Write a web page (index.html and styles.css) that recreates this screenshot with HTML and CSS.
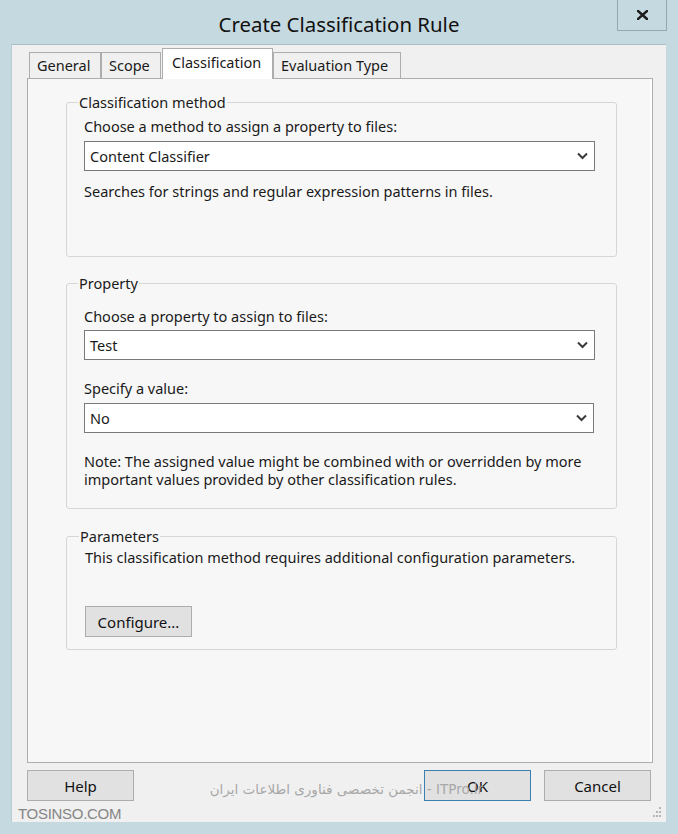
FILE: index.html
```html
<!DOCTYPE html>
<html lang="en">
<head>
    <meta charset="UTF-8">
    <meta name="viewport" content="width=device-width, initial-scale=1.0">
    <title>Create Classification Rule</title>
    <link rel="stylesheet" href="styles.css">
</head>
<body>
    <div class="window">
        <div class="titlebar">
            <span></span>
            <h1 class="title">Create Classification Rule</h1>
            <button class="close" aria-label="Close">
                <svg width="11" height="10" viewBox="0 0 11 10">
                    <path d="M1 1 L10 9 M10 1 L1 9" stroke="#1c1c1c" stroke-width="2.4" stroke-linecap="square"/>
                </svg>
            </button>
        </div>

        <div class="client">
            <div class="tabs">
                <div class="tab tab-general">General</div>
                <div class="tab tab-scope">Scope</div>
                <div class="tab tab-active">Classification</div>
                <div class="tab tab-eval">Evaluation Type</div>
            </div>

            <div class="panel">
                <fieldset class="group group-method">
                    <legend>Classification method</legend>
                    <div class="label first">Choose a method to assign a property to files:</div>
                    <div class="combo">
                        <span>Content Classifier</span>
                        <svg width="11" height="8" viewBox="0 0 11 8"><path d="M1 1.5 L5.5 6 L10 1.5" fill="none" stroke="#3a3a3a" stroke-width="2"/></svg>
                    </div>
                    <div class="desc">Searches for strings and regular expression patterns in files.</div>
                </fieldset>

                <fieldset class="group group-property">
                    <legend>Property</legend>
                    <div class="label">Choose a property to assign to files:</div>
                    <div class="combo">
                        <span>Test</span>
                        <svg width="11" height="8" viewBox="0 0 11 8"><path d="M1 1.5 L5.5 6 L10 1.5" fill="none" stroke="#3a3a3a" stroke-width="2"/></svg>
                    </div>
                    <div class="label spaced">Specify a value:</div>
                    <div class="combo combo-narrow">
                        <span>No</span>
                        <svg width="11" height="8" viewBox="0 0 11 8"><path d="M1 1.5 L5.5 6 L10 1.5" fill="none" stroke="#3a3a3a" stroke-width="2"/></svg>
                    </div>
                    <p class="note">Note: The assigned value might be combined with or overridden by more important values provided by other classification rules.</p>
                </fieldset>

                <fieldset class="group group-params">
                    <legend>Parameters</legend>
                    <div class="params-text">This classification method requires additional configuration parameters.</div>
                    <button class="btn btn-configure">Configure...</button>
                </fieldset>
            </div>

            <div class="buttons">
                <button class="btn">Help</button>
                <div class="spacer"></div>
                <button class="btn btn-default">OK</button>
                <button class="btn">Cancel</button>
            </div>

            <div class="footer">
                <span class="site">TOSINSO.COM</span>
                <svg class="grip" width="10" height="12" viewBox="0 0 10 12">
                    <rect x="7" y="1" width="2" height="2" fill="#b5b5b5"/>
                    <rect x="4" y="5" width="2" height="2" fill="#b5b5b5"/>
                    <rect x="7" y="5" width="2" height="2" fill="#b5b5b5"/>
                    <rect x="1" y="9" width="2" height="2" fill="#b5b5b5"/>
                    <rect x="4" y="9" width="2" height="2" fill="#b5b5b5"/>
                    <rect x="7" y="9" width="2" height="2" fill="#b5b5b5"/>
                </svg>
            </div>

            <div class="watermark" dir="rtl">ITPro.ir - انجمن تخصصی فناوری اطلاعات ایران</div>
        </div>
    </div>
</body>
</html>
```

FILE: styles.css
```css
* {
    box-sizing: border-box;
}

body {
    margin: 0;
    background-color: #c5d9e0;
    font-family: "Segoe UI", "Noto Sans", sans-serif;
    font-size: 14.5px;
    color: #1a1a1a;
}

.window {
    width: 678px;
    height: 834px;
    display: flex;
    flex-direction: column;
}

.titlebar {
    height: 44px;
    display: grid;
    grid-template-columns: 1fr auto 1fr;
    align-items: start;
}

.title {
    margin: 0;
    padding-top: 9px;
    font-size: 20.4px;
    font-weight: normal;
    line-height: 30px;
    color: #111;
}

.close {
    justify-self: end;
    width: 50px;
    height: 31px;
    margin-right: 11px;
    padding: 0;
    border: 1px solid #93a8b0;
    border-top: none;
    background-color: #c5d9e0;
    display: flex;
    align-items: center;
    justify-content: center;
}

.client {
    position: relative;
    height: 778px;
    margin: 0 12px 0 11px;
    background-color: #f0f0f0;
    border-top: 1px solid #aabdc4;
    border-left: 1px solid #b9ccd3;
    display: flex;
    flex-direction: column;
}

/* Onglets */
.tabs {
    height: 33px;
    padding-left: 17px;
    display: flex;
    align-items: flex-end;
}

.tab {
    height: 26px;
    padding: 0 7px;
    border: 1px solid #adadad;
    border-bottom: none;
    background-color: #f0f0f0;
    line-height: 24px;
}

.tab-general { width: 72px; }
.tab-scope { width: 60px; }
.tab-eval { width: 128px; }

.tab-active {
    position: relative;
    z-index: 1;
    width: 111px;
    height: 31px;
    margin: 0 0 -1px 1px;
    padding: 0 9px;
    background-color: #ffffff;
    line-height: 26px;
}

.panel {
    width: 626px;
    height: 685px;
    margin-left: 15px;
    padding: 13px 0 0 38px;
    border: 1px solid #adadad;
    background-color: #f7f7f7;
    box-shadow: inset -2px 0 0 #ffffff;
}

/* Group boxes */
.group {
    width: 551px;
    margin: 0;
    padding: 0 20px 0 17px;
    border: 1px solid #d6d6d6;
    border-radius: 3px;
}

.group legend {
    margin-left: -6px;
    padding: 0 1px;
    line-height: 20px;
}

.label {
    line-height: 20px;
    margin-top: 13px;
}

.label.first {
    margin-top: 4px;
}

.label.spaced {
    margin-top: 18px;
}

.combo {
    width: 511px;
    height: 30px;
    margin-top: 4px;
    padding: 0 6px 0 5px;
    border: 1px solid #7a7a7a;
    background-color: #ffffff;
    display: flex;
    align-items: center;
    justify-content: space-between;
}

.group-method .combo {
    margin-top: 5px;
}

.combo-narrow {
    width: 510px;
    margin-top: 5px;
}

.desc {
    margin-top: 10px;
    line-height: 20px;
}

.group-method {
    padding-bottom: 55px;
}

.group-property {
    margin-top: 16px;
    padding-bottom: 20px;
}

.note {
    margin: 19px 0 0;
    line-height: 18px;
}

.group-params {
    margin-top: 17px;
    padding-left: 18px;
    padding-bottom: 12px;
}

.params-text {
    margin-top: 1px;
    line-height: 20px;
}

/* Boutons */
.btn {
    width: 107px;
    height: 31px;
    padding: 0;
    border: 1px solid #adadad;
    background-color: #e1e1e1;
    font-family: inherit;
    font-size: 15px;
    color: #111;
}

.btn-configure {
    display: block;
    margin-top: 39px;
}

.btn-default {
    border-color: #3c7fb1;
}

.buttons {
    display: flex;
    gap: 13px;
    margin-top: 7px;
    padding: 0 15px;
}

.spacer {
    flex: 1;
}

.footer {
    flex: 1;
    display: flex;
    align-items: center;
    justify-content: space-between;
    padding: 0 4px 0 6px;
}

.site {
    font-family: "Liberation Sans", Arial, sans-serif;
    font-size: 15px;
    color: #858585;
    letter-spacing: -0.3px;
    margin-top: 3px;
}

.grip {
    align-self: flex-end;
    margin-bottom: 4px;
}

.watermark {
    position: absolute;
    left: 190px;
    top: 736px;
    width: 281px;
    font-family: "DejaVu Sans", sans-serif;
    font-size: 13.5px;
    color: #a8a8a8;
    white-space: nowrap;
}
```
